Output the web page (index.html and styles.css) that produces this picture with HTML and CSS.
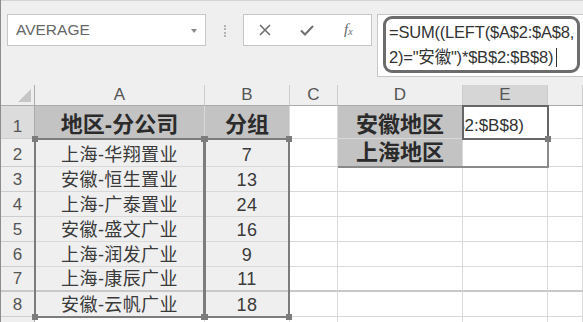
FILE: index.html
```html
<!DOCTYPE html>
<html lang="zh-CN">
<head>
    <meta charset="UTF-8">
    <title>AVERAGE</title>
    <link rel="stylesheet" href="styles.css">
</head>
<body>
<div class="app">
    <div class="formula-area">
        <div class="name-box">
            <span class="name">AVERAGE</span>
            <span class="caret"></span>
        </div>
        <div class="grip"></div>
        <div class="btn-box">
            <svg class="ico ico-x" width="14" height="14" viewBox="0 0 14 14"><path d="M2 2 L12 12 M12 2 L2 12" stroke="#707070" stroke-width="1.6" fill="none"/></svg>
            <svg class="ico ico-ok" width="14" height="14" viewBox="0 0 14 14"><path d="M1 7.5 L5 11.5 L13 3" stroke="#707070" stroke-width="2" fill="none"/></svg>
            <span class="fx"><i>f</i><sub>x</sub></span>
        </div>
        <div class="formula-box">
            <div class="edit-ring">
                <div>=SUM((LEFT($A$2:$A$8,</div>
                <div>2)="安徽")*$B$2:$B$8)<span class="cursor"></span></div>
            </div>
        </div>
    </div>

    <div class="sheet-wrap">
        <div class="sheet">
            <!-- column headers -->
            <div class="corner"><span class="tri"></span></div>
            <div class="c hd">A</div>
            <div class="c hd">B</div>
            <div class="c hd">C</div>
            <div class="c hd">D</div>
            <div class="c hd on">E</div>
            <div class="c hd"></div>

            <!-- row 1 -->
            <div class="c rh on">1</div>
            <div class="c fill-dk">地区-分公司</div>
            <div class="c fill-dk">分组</div>
            <div class="c"></div>
            <div class="c fill-dk">安徽地区</div>
            <div class="c active-txt"><span>$B$2:$B$8)</span></div>
            <div class="c"></div>

            <!-- row 2 -->
            <div class="c rh">2</div>
            <div class="c fill-lt txt">上海-华翔置业</div>
            <div class="c fill-lt txt">7</div>
            <div class="c"></div>
            <div class="c fill-dk">上海地区</div>
            <div class="c"></div>
            <div class="c"></div>

            <div class="c rh">3</div>
            <div class="c fill-lt txt">安徽-恒生置业</div>
            <div class="c fill-lt txt">13</div>
            <div class="c"></div><div class="c"></div><div class="c"></div><div class="c"></div>

            <div class="c rh">4</div>
            <div class="c fill-lt txt">上海-广泰置业</div>
            <div class="c fill-lt txt">24</div>
            <div class="c"></div><div class="c"></div><div class="c"></div><div class="c"></div>

            <div class="c rh">5</div>
            <div class="c fill-lt txt">安徽-盛文广业</div>
            <div class="c fill-lt txt">16</div>
            <div class="c"></div><div class="c"></div><div class="c"></div><div class="c"></div>

            <div class="c rh">6</div>
            <div class="c fill-lt txt">上海-润发广业</div>
            <div class="c fill-lt txt">9</div>
            <div class="c"></div><div class="c"></div><div class="c"></div><div class="c"></div>

            <div class="c rh thick">7</div>
            <div class="c fill-lt txt thick">上海-康辰广业</div>
            <div class="c fill-lt txt thick">11</div>
            <div class="c thick"></div><div class="c thick"></div><div class="c thick"></div><div class="c thick"></div>

            <div class="c rh">8</div>
            <div class="c fill-lt txt">安徽-云帆广业</div>
            <div class="c fill-lt txt">18</div>
            <div class="c"></div><div class="c"></div><div class="c"></div><div class="c"></div>

            <div class="c rh"></div>
            <div class="c"></div><div class="c"></div><div class="c"></div><div class="c"></div><div class="c"></div><div class="c"></div>
        </div>

        <!-- overlay layer: referenced ranges and selection -->
        <div class="marks">
            <div class="box-d"></div>
            <div class="range range-a"><i class="h tl"></i><i class="h tr"></i><i class="h bl"></i><i class="h br"></i></div>
            <div class="range range-b"><i class="h tl"></i><i class="h tr"></i><i class="h bl"></i><i class="h br"></i></div>
            <div class="active"><i class="h br"></i></div>
        </div>
    </div>
</div>
</body>
</html>
```

FILE: styles.css
```css
/* Global */
body {
    margin: 0;
    background-color: #fff;
    font-family: "Liberation Sans", "Noto Sans CJK SC", sans-serif;
    overflow: hidden;
}

.app {
    width: 583px;
    height: 322px;
    overflow: hidden;
    border-left: 1px solid #8c8c8c;
    box-sizing: border-box;
}

/* Formula bar */
.formula-area {
    height: 85px;
    box-sizing: border-box;
    background-color: #efefef;
    border-top: 1px solid #d4d4d4;
    padding: 13px 0 0 6px;
    display: flex;
    align-items: flex-start;
}

.name-box {
    width: 199px;
    height: 32px;
    box-sizing: border-box;
    background-color: #fff;
    border: 1px solid #c6c6c6;
    display: flex;
    align-items: center;
    justify-content: space-between;
    padding: 0 8px 0 8px;
}

.name {
    font-size: 15.5px;
    color: #676767;
}

.caret {
    width: 0;
    height: 0;
    border-left: 3.5px solid transparent;
    border-right: 3.5px solid transparent;
    border-top: 4px solid #8a8a8a;
    margin-top: 1px;
}

.grip {
    width: 0;
    height: 12px;
    margin: 11px 17px 0 18px;
    border-left: 2px dotted #b3b3b3;
}

.btn-box {
    width: 129px;
    height: 32px;
    box-sizing: border-box;
    background-color: #fff;
    border: 1px solid #c6c6c6;
    display: flex;
    align-items: center;
    padding-left: 14px;
}

.ico-ok {
    margin-left: 28px;
}

.fx {
    margin-left: 30px;
    font-family: "Liberation Serif", serif;
    font-size: 15px;
    color: #666;
    margin-top: -2px;
}

.fx sub {
    font-size: 10px;
    font-style: italic;
    vertical-align: -1px;
}

.formula-box {
    flex: 1;
    height: 63px;
    margin-left: 5px;
    box-sizing: border-box;
    background-color: #fff;
    border: 1px solid #c6c6c6;
    border-right: none;
    padding: 1px 0 0 5px;
}

.edit-ring {
    width: 197px;
    height: 57px;
    box-sizing: border-box;
    border: 3px solid #6c6c6c;
    border-radius: 9px;
    padding: 1px 0 0 3px;
    font-size: 16.5px;
    line-height: 25px;
    color: #333;
    white-space: nowrap;
    overflow: hidden;
    letter-spacing: -0.2px;
}

.cursor {
    display: inline-block;
    width: 1px;
    height: 19px;
    background-color: #333;
    vertical-align: -4px;
    margin-left: 3px;
}

/* Sheet grid: cells and overlay layer share the same tracks */
.sheet-wrap {
    display: grid;
}

.sheet,
.marks {
    grid-area: 1 / 1;
    display: grid;
    grid-template-columns: 34px 170px 85px 48px 125px 85px 1fr;
    grid-template-rows: 21px 33px 28px repeat(7, 25px);
}

.marks {
    pointer-events: none;
}

.c {
    box-sizing: border-box;
    border-right: 1px solid #d9d9d9;
    border-bottom: 1px solid #d9d9d9;
    display: flex;
    align-items: flex-end;
    justify-content: center;
    overflow: hidden;
    white-space: nowrap;
}

.corner {
    background-color: #efefef;
    border-right: 1px solid #ababab;
    border-bottom: 1px solid #ababab;
    display: flex;
    align-items: flex-end;
    justify-content: flex-end;
    padding: 0 3px 3px 0;
}

.tri {
    width: 0;
    height: 0;
    border-left: 13px solid transparent;
    border-bottom: 13px solid #c6c6c6;
}

.hd {
    background-color: #efefef;
    border-right-color: #cdcdcd;
    border-bottom-color: #ababab;
    align-items: center;
    font-size: 17px;
    color: #555;
}

.hd.on {
    background-color: #d6d6d6;
}

.rh {
    background-color: #efefef;
    border-right-color: #ababab;
    border-bottom-color: #cdcdcd;
    font-size: 17px;
    color: #555;
    padding-bottom: 1px;
}

.rh.on {
    background-color: #dcdcdc;
}

.fill-dk {
    background-color: #c3c3c3;
    font-size: 22px;
    font-weight: bold;
    color: #2b2b2b;
    line-height: 1.2;
}

.fill-lt {
    background-color: #efefef;
}

.txt {
    font-size: 18px;
    color: #3a3a3a;
    line-height: 1.25;
    letter-spacing: 0.4px;
}

.thick {
    border-bottom: 2px solid #c8c8c8;
}

.active-txt {
    justify-content: flex-end;
    padding: 0 23px 2px 0;
    font-size: 17px;
    color: #333;
}

/* Overlays */
.range,
.active,
.box-d {
    position: relative;
    box-sizing: border-box;
}

.range {
    grid-row: 3 / 10;
    border: 2px solid #7c7c7c;
    margin: -1px 0 -1px -1px;
}

.range-a {
    grid-column: 2;
}

.range-b {
    grid-column: 3;
}

.box-d {
    grid-column: 5 / 7;
    grid-row: 2 / 4;
    border-right: 2px solid #8a8a8a;
    border-bottom: 2px solid #8a8a8a;
    margin: 0 -1px -1px 0;
}

.active {
    grid-column: 6;
    grid-row: 2;
    border: 2px solid #666;
    margin: -1px -1px -1px -1px;
}

.h {
    position: absolute;
    width: 6px;
    height: 6px;
    background-color: #7c7c7c;
}

.h.tl { left: -4px; top: -4px; }
.h.tr { right: -4px; top: -4px; }
.h.bl { left: -4px; bottom: -4px; }
.h.br { right: -4px; bottom: -4px; }
```
